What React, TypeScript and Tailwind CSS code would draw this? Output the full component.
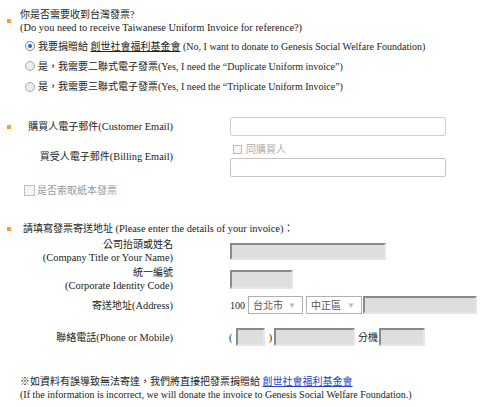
const font = { fontFamily: '"Liberation Serif", "Noto Sans CJK TC", serif' }

function Bullet({ className = "" }: { className?: string }) {
  return <div className={`w-[4px] h-[4px] bg-[#f0a030] shrink-0 ${className}`}></div>
}

function Radio({ checked }: { checked?: boolean }) {
  return (
    <span
      className={`w-[10px] h-[10px] rounded-full border flex items-center justify-center shrink-0 ${
        checked ? "border-[#7a8a9a] bg-[#f4f6f8]" : "border-[#a8a8a8] bg-[#ececec]"
      }`}
    >
      {checked && <span className="w-[4px] h-[4px] rounded-full bg-[#2b63c8]"></span>}
    </span>
  )
}

function GrayInput({ className = "" }: { className?: string }) {
  return (
    <div
      className={`bg-[#dedede] border-2 border-t-[#8a8a8a] border-l-[#8a8a8a] border-r-[#e6e6e6] border-b-[#e6e6e6] ${className}`}
    ></div>
  )
}

function Select({ label, className = "" }: { label: string; className?: string }) {
  return (
    <div
      className={`h-[18px] bg-white border border-[#b0b0b0] flex items-center justify-between pl-[4px] pr-[6px] text-[#555] ${className}`}
    >
      <span>{label}</span>
      <span className="text-[#bbb] text-[8px]">▼</span>
    </div>
  )
}

export default function App() {
  return (
    <div className="w-[485px] h-[407px] bg-white text-[#222] text-[10px] leading-[13px] overflow-hidden" style={font}>
      {/* question */}
      <div className="pt-[8px] flex items-center">
        <Bullet className="ml-[7px] mr-[9px]" />
        <div>
          <div>你是否需要收到台灣發票?</div>
          <div className="text-[10.4px]">(Do you need to receive Taiwanese Uniform Invoice for reference?)</div>
        </div>
      </div>

      <div className="mt-[2px] pl-[25px]">
        <div className="h-[20px] flex items-center gap-[3px]">
          <Radio checked />
          <span>
            我要捐贈給 <span className="underline">創世社會福利基金會</span> (No, I want to donate to Genesis Social Welfare Foundation)
          </span>
        </div>
        <div className="h-[20px] flex items-center gap-[3px]">
          <Radio />
          <span>是，我需要二聯式電子發票(Yes, I need the “Duplicate Uniform invoice”)</span>
        </div>
        <div className="h-[21px] flex items-center gap-[3px]">
          <Radio />
          <span>是，我需要三聯式電子發票(Yes, I need the “Triplicate Uniform Invoice”)</span>
        </div>
      </div>

      {/* email */}
      <div className="mt-[20px] flex items-center">
        <Bullet className="ml-[7px]" />
        <div className="w-[162px] text-right">
          購買人電子郵件<span className="text-[10.4px]">(Customer Email)</span>
        </div>
        <div className="ml-[57px] w-[216px] h-[19px] border border-[#cfcfcf] rounded-[2px] bg-white"></div>
      </div>

      <div className="flex items-center">
        <div className="w-[173px] text-right">
          買受人電子郵件<span className="text-[10.4px]">(Billing Email)</span>
        </div>
        <div className="ml-[57px] flex flex-col">
          <div className="mt-[7px] h-[12px] flex items-center pl-[3px] gap-[4px] text-[#aaa]">
            <span className="w-[9px] h-[9px] border border-[#bbb] bg-[#f6f6f6]"></span>
            <span>同購買人</span>
          </div>
          <div className="mt-[3px] w-[216px] h-[19px] border border-[#c4c4c4] rounded-[2px] bg-white"></div>
        </div>
      </div>

      <div className="mt-[7px] h-[12px] pl-[24px] flex items-center gap-[2px] text-[#9a9a9a]">
        <span className="w-[11px] h-[11px] border border-[#c0c0c0] bg-[#f4f4f4]"></span>
        <span>是否索取紙本發票</span>
      </div>

      {/* address */}
      <div className="mt-[26px] flex items-center">
        <Bullet className="ml-[7px] mr-[12px]" />
        <div>
          請填寫發票寄送地址 <span className="text-[10.4px]">(Please enter the details of your invoice)</span>：
        </div>
      </div>

      <div className="mt-[3px] flex items-center">
        <div className="w-[173px] text-right">
          <div>公司抬頭或姓名</div>
          <div className="text-[10.4px]">(Company Title or Your Name)</div>
        </div>
        <GrayInput className="ml-[57px] w-[156px] h-[17px]" />
      </div>

      <div className="mt-[2px] flex items-center">
        <div className="w-[173px] text-right">
          <div>統一編號</div>
          <div className="text-[10.4px]">(Corporate Identity Code)</div>
        </div>
        <GrayInput className="ml-[57px] w-[63px] h-[19px]" />
      </div>

      <div className="mt-[4px] flex items-center">
        <div className="w-[173px] text-right">
          寄送地址<span className="text-[10.4px]">(Address)</span>
        </div>
        <div className="ml-[57px] flex items-center">
          <span className="w-[18px]">100</span>
          <Select label="台北市" className="w-[55px]" />
          <Select label="中正區" className="ml-[3px] w-[56px]" />
          <GrayInput className="ml-[1px] w-[114px] h-[18px]" />
        </div>
      </div>

      <div className="mt-[14px] flex items-center">
        <div className="w-[173px] text-right">
          聯絡電話<span className="text-[10.4px]">(Phone or Mobile)</span>
        </div>
        <div className="ml-[56px] flex items-center">
          <span className="w-[7px]">(</span>
          <GrayInput className="w-[29px] h-[18px]" />
          <span className="w-[9px] text-right pr-[2px]">)</span>
          <GrayInput className="w-[81px] h-[18px]" />
          <span className="ml-[3px] w-[21px]">分機</span>
          <GrayInput className="w-[46px] h-[18px]" />
        </div>
      </div>

      {/* note */}
      <div className="mt-[29px] pl-[20px]">
        <div>
          ※如資料有誤導致無法寄達，我們將直接把發票捐贈給{" "}
          <a className="text-[#2244cc] underline">創世社會福利基金會</a>
        </div>
        <div>(If the information is incorrect, we will donate the invoice to Genesis Social Welfare Foundation.)</div>
      </div>
    </div>
  )
}
